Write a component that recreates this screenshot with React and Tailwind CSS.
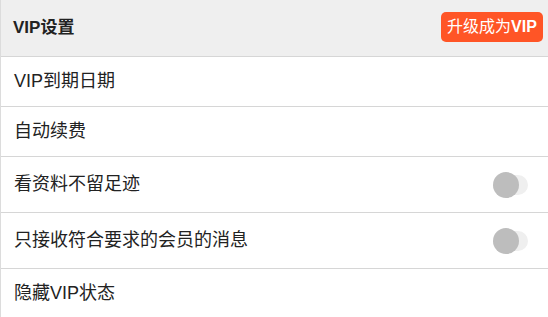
import React from 'react';

const font = { fontFamily: '"Liberation Sans", "Noto Sans CJK SC", sans-serif' };

const Toggle = () => (
  <div className="relative w-[35px] h-[20px] mr-[20px]">
    <div className="absolute inset-0 rounded-full bg-[#efefef]" />
    <div className="absolute left-0 top-[-3px] w-[26px] h-[26px] rounded-full bg-[#bdbdbd]" />
  </div>
);

const Row = ({ label, toggle, h }) => (
  <div className={`flex items-center justify-between border-b border-[#d6d6d6] pl-[13px] ${h}`}>
    <span className="text-[18px] text-[#222]">{label}</span>
    {toggle && <Toggle />}
  </div>
);

export default function App() {
  return (
    <div className="w-[548px] h-[317px] overflow-hidden bg-white border-l border-[#dcdcdc]" style={font}>
      <div className="flex items-center justify-between h-[57px] bg-[#efefef] border-b border-[#d6d6d6] pl-[12px] pr-[5px]">
        <span className="text-[17px] font-bold text-[#222]">VIP设置</span>
        <button className="h-[30px] w-[102px] rounded-[5px] bg-[#ff5526] text-white text-[16px] mb-[2px]">
          升级成为<span className="font-bold">VIP</span>
        </button>
      </div>
      <Row label="VIP到期日期" h="h-[50px]" />
      <Row label="自动续费" h="h-[50px]" />
      <Row label="看资料不留足迹" toggle h="h-[56px]" />
      <Row label="只接收符合要求的会员的消息" toggle h="h-[56px]" />
      <Row label="隐藏VIP状态" h="h-[50px]" />
    </div>
  );
}
